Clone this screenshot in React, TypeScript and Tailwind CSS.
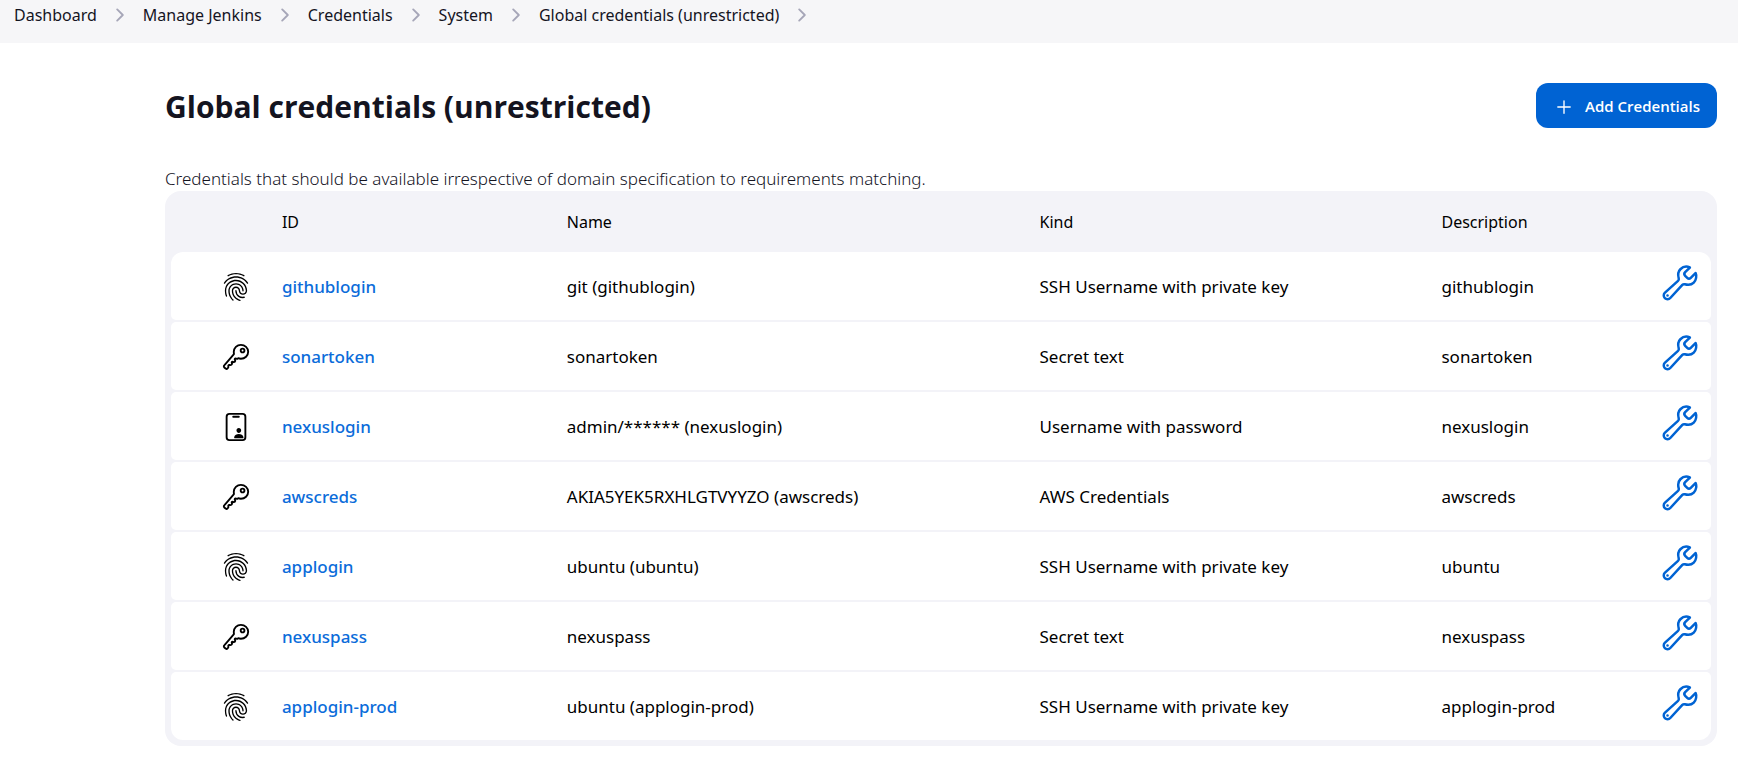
import {
  IoAdd,
  IoBuildOutline,
  IoChevronForward,
  IoFingerPrintOutline,
  IoIdCardOutline,
  IoKeyOutline,
} from "react-icons/io5";
import type { IconType } from "react-icons";

type Credential = {
  id: string;
  name: string;
  kind: string;
  description: string;
  icon: IconType;
};

const SSH = "SSH Username with private key";

const crumbs = ["Dashboard", "Manage Jenkins", "Credentials", "System", "Global credentials (unrestricted)"];

const credentials: Credential[] = [
  { id: "githublogin", name: "git (githublogin)", kind: SSH, description: "githublogin", icon: IoFingerPrintOutline },
  { id: "sonartoken", name: "sonartoken", kind: "Secret text", description: "sonartoken", icon: IoKeyOutline },
  { id: "nexuslogin", name: "admin/****** (nexuslogin)", kind: "Username with password", description: "nexuslogin", icon: IoIdCardOutline },
  { id: "awscreds", name: "AKIA5YEK5RXHLGTVYYZO (awscreds)", kind: "AWS Credentials", description: "awscreds", icon: IoKeyOutline },
  { id: "applogin", name: "ubuntu (ubuntu)", kind: SSH, description: "ubuntu", icon: IoFingerPrintOutline },
  { id: "nexuspass", name: "nexuspass", kind: "Secret text", description: "nexuspass", icon: IoKeyOutline },
  { id: "applogin-prod", name: "ubuntu (applogin-prod)", kind: SSH, description: "applogin-prod", icon: IoFingerPrintOutline },
];

function Breadcrumbs() {
  return (
    <nav aria-label="Breadcrumb" className="bg-[#f6f6f8] pb-3.5">
      <ol className="flex h-[29px] items-center pl-3.5 text-base text-[#14141f]">
        {crumbs.map((crumb) => (
          <li key={crumb} className="flex items-center">
            <a href="#">{crumb}</a>
            <IoChevronForward className="mx-[13px] size-5 text-[#a6a6b8]" aria-hidden="true" />
          </li>
        ))}
      </ol>
    </nav>
  );
}

function CredentialRow({ credential }: { credential: Credential }) {
  const Icon = credential.icon;
  return (
    <tr className="h-[68px] *:bg-white *:p-0 *:pt-0.5 *:first:rounded-l-[5px] *:last:rounded-r-[5px] first:*:first:rounded-tl-xl first:*:last:rounded-tr-xl last:*:first:rounded-bl-xl last:*:last:rounded-br-xl">
      <td>
        <Icon className="ml-[50px] size-[30px]" aria-hidden="true" />
      </td>
      <td>
        <a href="#" className="font-medium text-[#0b6cda]">{credential.id}</a>
      </td>
      <td>{credential.name}</td>
      <td>{credential.kind}</td>
      <td>{credential.description}</td>
      <td>
        <a href="#" aria-label={`Update ${credential.id}`} className="flex justify-end pr-[11px] pb-2 text-[#0063d3]">
          <IoBuildOutline className="size-10" aria-hidden="true" />
        </a>
      </td>
    </tr>
  );
}

export default function App() {
  return (
    <div className="min-h-screen bg-white font-['Noto_Sans','Open_Sans',sans-serif] text-black">
      <Breadcrumbs />
      <main className="pt-10 pr-[21px] pb-3.5 pl-[165px]">
        <div className="flex h-[45px] items-center justify-between">
          <h1 className="pt-0.5 font-['Open_Sans',sans-serif] text-[30px] font-bold text-[#14141f]">Global credentials (unrestricted)</h1>
          <button type="button" className="flex h-[45px] items-center gap-2.5 rounded-xl bg-[#0063d3] px-[17px] pt-0.5 font-['Open_Sans',sans-serif] text-[15px] font-semibold text-white">
            <IoAdd className="size-[22px]" aria-hidden="true" />
            Add Credentials
          </button>
        </div>
        <p className="mt-[38px] h-[25px] text-[17px] leading-[25px] font-light text-[#14141f]">
          Credentials that should be available irrespective of domain specification to requirements matching.
        </p>
        <table className="w-full table-fixed border-separate border-spacing-x-0 border-spacing-y-0.5 rounded-2xl bg-[#f3f3f8] px-1.5 pb-1 text-left text-[17px]">
          <colgroup>
            <col className="w-[7.2%]" />
            <col className="w-[18.5%]" />
            <col className="w-[30.7%]" />
            <col className="w-[26.1%]" />
            <col className="w-[10.5%]" />
            <col className="w-[7%]" />
          </colgroup>
          <thead>
            <tr className="h-[57px] text-base *:p-0 *:font-normal">
              <td />
              <th scope="col">ID</th>
              <th scope="col">Name</th>
              <th scope="col">Kind</th>
              <th scope="col">Description</th>
              <td />
            </tr>
          </thead>
          <tbody>
            {credentials.map((credential) => (
              <CredentialRow key={credential.id} credential={credential} />
            ))}
          </tbody>
        </table>
      </main>
    </div>
  );
}
